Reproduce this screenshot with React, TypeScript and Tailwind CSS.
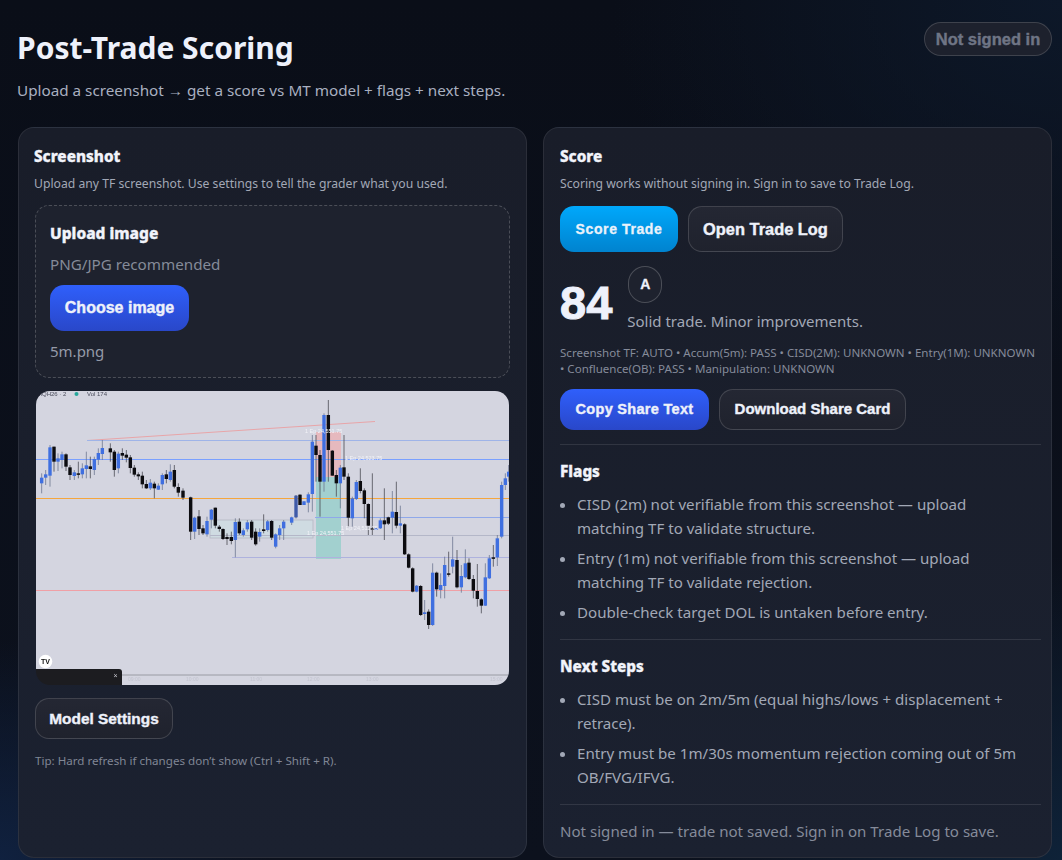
type C = [number, number, number, number, number, string];

const z3: C[] = [
  [35,265,278,295,325,'b'],[47,255,268,278,300,'b'],[60,180,187,272,305,'b'],[72,185,185,230,260,'k'],[84,205,220,230,258,'b'],[96,200,208,225,250,'b'],[108,205,208,245,258,'k'],[120,240,247,270,285,'k'],[133,255,262,273,285,'b'],[145,230,265,267,280,'k'],[157,235,250,268,280,'b'],[169,200,241,252,280,'b'],[181,215,244,252,280,'k'],[193,215,222,255,270,'b'],[205,190,204,224,240,'b'],[217,165,189,207,225,'b'],[241,175,190,202,230,'k'],[253,195,200,255,275,'k'],[265,200,206,250,265,'b'],[277,190,204,212,225,'k'],[289,195,209,218,232,'k'],[301,210,217,249,265,'k'],[313,240,248,269,275,'k'],[325,262,268,274,285,'k'],[337,260,272,298,310,'k'],[349,285,297,310,312,'k'],[361,282,293,310,315,'b'],[373,290,296,310,340,'k'],[385,295,302,314,315,'b'],[397,265,270,298,315,'b'],[409,255,268,282,295,'k'],[421,238,260,285,290,'b'],[433,240,255,305,310,'k'],[445,295,306,323,335,'k'],[459,310,317,338,345,'k'],[482,335,337,440,465,'k'],[494,395,398,440,462,'b'],[507,375,394,432,450,'k'],[519,420,430,445,450,'k'],[531,395,408,448,455,'b'],[544,372,374,404,430,'b'],[556,368,368,422,430,'k'],[568,420,425,432,440,'k'],[579,430,432,462,465,'k'],[591,445,456,462,480,'k'],[604,440,456,468,478,'k'],[616,400,411,465,517,'b'],[628,400,410,445,450,'k'],[640,430,436,450,455,'b'],[652,405,412,433,440,'b'],[665,405,410,458,465,'k'],[677,430,440,478,482,'k'],[689,430,441,455,470,'b'],[701,388,433,438,445,'k'],[713,405,409,435,440,'b'],[725,405,408,458,465,'k'],[737,445,448,485,490,'b'],
];
const z4: C[] = [
  [29,420,430,450,465,'b'],[41,405,410,430,465,'b'],[65,395,397,413,420,'b'],[78,330,332,397,400,'d'],[90,328,329,360,360,'k'],[102,348,349,360,360,'b'],[115,322,328,353,382,'b'],[127,150,170,327,380,'b'],[138,150,182,210,290,'k'],[150,195,210,290,395,'k'],[162,85,90,290,320,'b'],[175,45,90,195,290,'k'],[187,195,197,272,272,'k'],[199,255,270,295,335,'k'],[211,240,248,295,370,'b'],[222,150,247,275,285,'k'],[235,265,275,398,425,'k'],[247,335,340,400,425,'b'],[259,285,291,342,345,'b'],[271,250,288,318,325,'k'],[283,310,316,357,400,'k'],[295,355,357,422,450,'k'],[307,265,430,433,450,'k'],[319,428,430,435,435,'b'],[331,400,406,430,432,'b'],[343,310,406,418,465,'k'],[355,395,397,416,420,'k'],[367,318,380,398,445,'b'],[379,290,381,422,430,'k'],[391,362,415,422,445,'b'],[404,415,418,508,510,'k'],
  [695,290,300,455,460,'b'],[706,265,280,300,315,'b'],[716,240,260,275,290,'b'],
];
const z6: C[] = [
  [26,70,73,113,115,'k'],[38,112,115,185,187,'k'],[50,165,167,185,187,'b'],[62,165,168,255,258,'k'],[74,210,247,252,270,'b'],[86,238,245,285,297,'k'],[98,100,128,285,288,'b'],[110,125,128,178,200,'k'],[122,130,165,180,205,'b'],[134,80,105,168,205,'b'],[146,65,130,133,140,'k'],[158,20,88,110,130,'b'],[171,60,90,172,175,'k'],[184,105,138,172,188,'b'],[196,58,100,142,145,'b'],[207,85,98,147,150,'k'],[220,135,147,182,205,'k'],[232,102,183,207,230,'k'],[244,205,208,227,250,'k'],[256,100,142,227,228,'b'],[268,75,85,145,147,'b'],[280,45,82,85,110,'k'],[292,15,25,82,108,'b'],
];

const fill: Record<string, string> = { b: '#3f6fe0', k: '#0c0c10', d: '#3f5aa8' };

function toReal(list: C[], ox: number, oy: number): C[] {
  return list.map(([x, a, b, c, d, col]) => [ox + x / 3, oy + a / 3, oy + b / 3, oy + c / 3, oy + d / 3, col] as C);
}

const candles: C[] = [...toReal(z3, 30, 385), ...toReal(z4, 270, 385), ...toReal(z6, 400, 530)];

function Chart() {
  return (
    <svg viewBox="36 391 473 294" className="block h-[294px] w-[473px] blur-[0.3px]">
      <rect x="36" y="391" width="473" height="294" fill="#d4d5e0" />
      <rect x="210" y="520" width="103" height="18" fill="#cfdbe2" stroke="#b4b7c4" strokeWidth="0.8" />
      <rect x="316" y="432" width="25" height="45" fill="#e6b9be" />
      <rect x="316" y="477" width="25" height="82" fill="#a2d0cf" />
      <line x1="87" y1="440.5" x2="375" y2="421.5" stroke="#e8a5a8" strokeWidth="1" />
      <line x1="87" y1="440.5" x2="509" y2="440.5" stroke="#9fb4e8" strokeWidth="1" />
      <line x1="36" y1="459.5" x2="509" y2="459.5" stroke="#7aa0ff" strokeWidth="1" />
      <line x1="36" y1="498.5" x2="509" y2="498.5" stroke="#f5a63e" strokeWidth="1.2" />
      <line x1="315" y1="517.5" x2="509" y2="517.5" stroke="#8fa8ea" strokeWidth="1" />
      <line x1="210" y1="535.5" x2="509" y2="535.5" stroke="#b4b7c8" strokeWidth="1" />
      <line x1="232" y1="557.5" x2="509" y2="557.5" stroke="#aeb2de" strokeWidth="1.2" />
      <line x1="36" y1="590.5" x2="509" y2="590.5" stroke="#f0a0a6" strokeWidth="1" />
      <line x1="122" y1="675" x2="509" y2="675" stroke="#8c8d96" strokeWidth="0.8" />
      {candles.map(([x, wt, bt, bb, wb, col], i) => (
        <g key={i}>
          <line x1={x} y1={wt} x2={x} y2={wb} stroke={col === 'b' ? '#6d7690' : '#4a4a52'} strokeWidth="0.8" />
          <rect x={x - 1.7} y={bt} width="3.4" height={Math.max(bb - bt, 1.5)} fill={fill[col]} />
        </g>
      ))}
      <g fill="#f2f3f8" fontSize="5.5" fontFamily="Liberation Sans">
        <text x="305" y="433">1 Ep 24,551.75</text>
        <text x="345" y="460">1 Ep 24,523.75</text>
        <text x="341" y="530">1 Ep 24,511.75</text>
        <text x="307" y="535">1 Ep 24,551.75</text>
      </g>
      <g fill="#4b4d5c" fontSize="6" fontFamily="Liberation Sans">
        <text x="37" y="396">MQH26 · 2</text>
        <text x="87" y="396">Vol 174</text>
      </g>
      <circle cx="76.5" cy="394" r="2" fill="#25a69a" />
      <circle cx="45.5" cy="661.5" r="6.8" fill="#ffffff" />
      <text x="45.5" y="664" textAnchor="middle" fontSize="7" fontWeight="900" fill="#111" fontFamily="Liberation Sans">TV</text>
      <path d="M36 669 H119 a3 3 0 0 1 3 3 V685 H36 Z" fill="#1c1c20" />
      <text x="115.5" y="678" textAnchor="middle" fontSize="7" fill="#c8c8d0" fontFamily="Liberation Sans">×</text>
      <g fill="#c2c3ce" fontSize="5" fontFamily="Liberation Sans">
        <text x="128" y="681">09:00</text>
        <text x="186" y="681">10:00</text>
        <text x="250" y="681">11:00</text>
        <text x="307" y="681">12:00</text>
        <text x="366" y="681">13:00</text>
        <text x="490" y="681">15:00</text>
      </g>
    </svg>
  );
}

const secondary =
  "rounded-[14px] border border-white/15 bg-[linear-gradient(180deg,#242733,#1f222d)] font-['Liberation_Sans',sans-serif] font-bold text-[#eef1fa] [-webkit-text-stroke:0.4px_currentColor]";
const primaryBlue =
  "rounded-[14px] bg-[linear-gradient(180deg,#2f5ffb,#2947c9)] font-['Liberation_Sans',sans-serif] font-bold text-[#eef1fa] [-webkit-text-stroke:0.4px_currentColor]";
const heading = "font-extrabold text-[#f2f4fb] [-webkit-text-stroke:0.35px_currentColor]";

export default function App() {
  return (
    <div className="relative h-[860px] w-[1062px] overflow-hidden bg-[radial-gradient(ellipse_at_100%_0%,#0d1829_0%,transparent_30%),radial-gradient(ellipse_at_0%_100%,#10213f_0%,transparent_18%),radial-gradient(ellipse_at_100%_100%,#0e2238_0%,transparent_25%),linear-gradient(180deg,#0a0e18,#0c111d)] pl-[18px] pr-[10px] font-['Noto_Sans',sans-serif]">
      <header className="flex h-[127px] items-start justify-between">
        <div className="pt-[25px]">
          <h1 className="-ml-[1px] text-[30px] font-bold leading-[46px] text-[#eef1fb]">Post-Trade Scoring</h1>
          <p className="mt-[7px] -ml-[1px] text-[15.25px] leading-[24px] whitespace-nowrap text-[#a9b0c0]">
            Upload a screenshot → get a score vs MT model + flags + next steps.
          </p>
        </div>
        <div className="mt-[22px] flex h-[34px] w-[128px] items-center justify-center rounded-full border border-white/15 bg-[#1d212d] font-['Liberation_Sans',sans-serif] text-[16.5px] font-bold text-[#6f7585] [-webkit-text-stroke:0.4px_currentColor]">
          Not signed in
        </div>
      </header>

      <div className="grid grid-cols-2 gap-4">
        <section className="h-[731px] rounded-[16px] border border-white/[0.08] bg-[linear-gradient(180deg,#191d29,#1b2130)] px-[16px] py-[15px]">
          <h2 className={`${heading} mt-[2px] -ml-[1px] text-[15.3px] leading-[22px]`}>Screenshot</h2>
          <p className="mt-[8px] -ml-[1px] text-[12.2px] leading-[18px] whitespace-nowrap text-[#a2a8b6]">
            Upload any TF screenshot. Use settings to tell the grader what you used.
          </p>
          <div className="mt-[12px] h-[173px] rounded-[14px] border border-dashed border-white/20 bg-[#1e222e] px-[14px] pt-[15px]">
            <h3 className={`${heading} text-[15.5px] leading-[24px]`}>Upload image</h3>
            <p className="mt-[7px] text-[15.2px] leading-[24px] text-[#858b99]">PNG/JPG recommended</p>
            <button className={`${primaryBlue} mt-[9px] block h-[46px] w-[139px] text-[16px]`}>Choose image</button>
            <p className="mt-[8px] text-[15px] leading-[24px] text-[#959aa8]">5m.png</p>
          </div>
          <div className="mt-[13px] ml-[1px] h-[294px] w-[473px] overflow-hidden rounded-[14px]">
            <Chart />
          </div>
          <button className={`${secondary} mt-[13px] block h-[41px] w-[138px] text-[15.4px]`}>Model Settings</button>
          <p className="mt-[13px] text-[11.6px] leading-[18px] whitespace-nowrap text-[#808695]">
            Tip: Hard refresh if changes don’t show (Ctrl + Shift + R).
          </p>
        </section>

        <section className="h-[731px] rounded-[16px] border border-white/[0.08] bg-[linear-gradient(180deg,#191d29,#1b2130)] pt-[15px] pr-[10px] pl-[16px]">
          <h2 className={`${heading} mt-[2px] text-[15.3px] leading-[22px]`}>Score</h2>
          <p className="mt-[8px] text-[12.2px] leading-[18px] whitespace-nowrap text-[#a2a8b6]">
            Scoring works without signing in. Sign in to save to Trade Log.
          </p>
          <div className="mt-[13px] flex gap-[10px]">
            <button className="h-[46px] w-[118px] rounded-[14px] bg-[linear-gradient(180deg,#00a8fb,#0083cf)] font-['Liberation_Sans',sans-serif] text-[14px] font-bold tracking-[0.6px] text-[#eaf2fb] [-webkit-text-stroke:0.3px_currentColor]">
              Score Trade
            </button>
            <button className={`${secondary} h-[46px] w-[155px] text-[16.4px]`}>Open Trade Log</button>
          </div>
          <div className="mt-[14px] flex gap-[16px]">
            <div className="mt-[14px] font-['Liberation_Sans',sans-serif] text-[47px] leading-[46px] font-bold text-[#eef1fb] [-webkit-text-stroke:1px_currentColor]">
              84
            </div>
            <div>
              <div className="flex h-[37px] w-[34px] items-center justify-center rounded-full border border-white/20 bg-[#1e222e] font-['Liberation_Sans',sans-serif] text-[14px] font-bold text-[#eef1fb] [-webkit-text-stroke:0.3px_currentColor]">
                A
              </div>
              <p className="mt-[6px] -ml-[1px] text-[15px] leading-[24px] whitespace-nowrap text-[#a2a8b6]">Solid trade. Minor improvements.</p>
            </div>
          </div>
          <p className="mt-[12px] w-[478px] text-[11.55px] leading-[16px] text-[#858b9a]">
            Screenshot TF: AUTO • Accum(5m): PASS • CISD(2M): UNKNOWN • Entry(1M): UNKNOWN • Confluence(OB): PASS • Manipulation: UNKNOWN
          </p>
          <div className="mt-[12px] flex gap-[10px]">
            <button className={`${primaryBlue} h-[41px] w-[149px] text-[14.5px] tracking-[0.3px]`}>Copy Share Text</button>
            <button className={`${secondary} h-[41px] w-[187px] text-[15px]`}>Download Share Card</button>
          </div>
          <hr className="mt-[14px] border-white/10" />
          <h3 className={`${heading} mt-[15px] text-[15.3px] leading-[22px]`}>Flags</h3>
          <ul className="mt-[10px] flex list-disc flex-col gap-[6px] pl-[17px] text-[15.1px] leading-[24px] text-[#a2a8b6] marker:text-[#a2a8b6]">
            <li>
              CISD (2m) not verifiable from this screenshot — upload
              <br />
              matching TF to validate structure.
            </li>
            <li>
              Entry (1m) not verifiable from this screenshot — upload
              <br />
              matching TF to validate rejection.
            </li>
            <li>Double-check target DOL is untaken before entry.</li>
          </ul>
          <hr className="mt-[15px] border-white/10" />
          <h3 className={`${heading} mt-[15px] text-[15.3px] leading-[22px]`}>Next Steps</h3>
          <ul className="mt-[10px] flex list-disc flex-col gap-[6px] pl-[17px] text-[15.1px] leading-[24px] text-[#a2a8b6] marker:text-[#a2a8b6]">
            <li>
              CISD must be on 2m/5m (equal highs/lows + displacement +
              <br />
              retrace).
            </li>
            <li>
              Entry must be 1m/30s momentum rejection coming out of 5m
              <br />
              OB/FVG/IFVG.
            </li>
          </ul>
          <hr className="mt-[15px] border-white/10" />
          <p className="mt-[14px] text-[15.1px] leading-[24px] whitespace-nowrap text-[#858b9a]">
            Not signed in — trade not saved. Sign in on Trade Log to save.
          </p>
        </section>
      </div>
    </div>
  );
}
